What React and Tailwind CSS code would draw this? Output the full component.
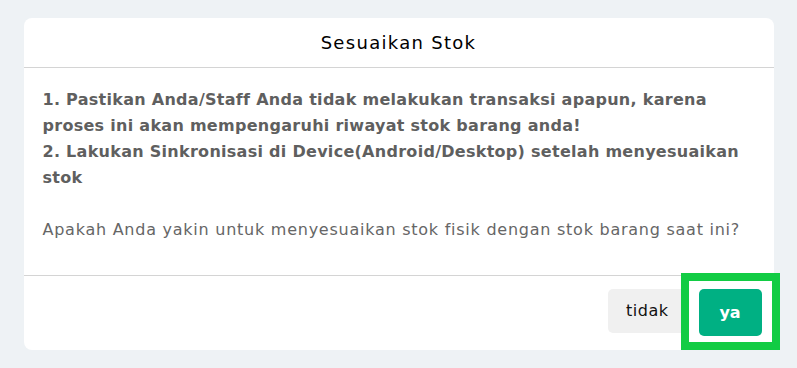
export default function App() {
  return (
    <div
      className="w-[797px] h-[368px] bg-[#eef2f5] pt-[18px]"
      style={{ fontFamily: "'DejaVu Sans', sans-serif" }}
    >
      <div className="relative mx-auto w-[750px] h-[332px] bg-white rounded-[8px] flex flex-col">
        <div className="h-[50px] border-b border-[#d4d4d4] flex items-center justify-center">
          <h2 className="text-[18px] font-medium tracking-[1.3px] text-black">Sesuaikan Stok</h2>
        </div>

        <div className="px-[19px] pt-[19px] pb-[32px] border-b border-[#d4d4d4] text-[16px] leading-[26px]">
          <p className="font-bold tracking-[0.28px] text-[#5f5f5f]">
            1. Pastikan Anda/Staff Anda tidak melakukan transaksi apapun, karena proses ini akan
            mempengaruhi riwayat stok barang anda!
            <br />
            2. Lakukan Sinkronisasi di Device(Android/Desktop) setelah menyesuaikan stok
          </p>
          <p className="mt-[26px] tracking-[0.75px] text-[#666666]">
            Apakah Anda yakin untuk menyesuaikan stok fisik dengan stok barang saat ini?
          </p>
        </div>

        <div className="flex-1 flex justify-end items-start gap-[12px] pt-[13px] pr-[12px]">
          <button className="h-[44px] px-[18px] rounded-[5px] bg-[#f0f0f0] text-[16px] tracking-[0.5px] text-[#111]">
            tidak
          </button>
          <div className="relative">
            <button className="h-[47px] w-[63px] rounded-[5px] bg-[#00b083] text-[16px] font-bold text-white">
              ya
            </button>
            <div className="absolute -left-[18px] -top-[16px] w-[99px] h-[77px] border-[8px] border-[#12cc44] pointer-events-none" />
          </div>
        </div>
      </div>
    </div>
  );
}
